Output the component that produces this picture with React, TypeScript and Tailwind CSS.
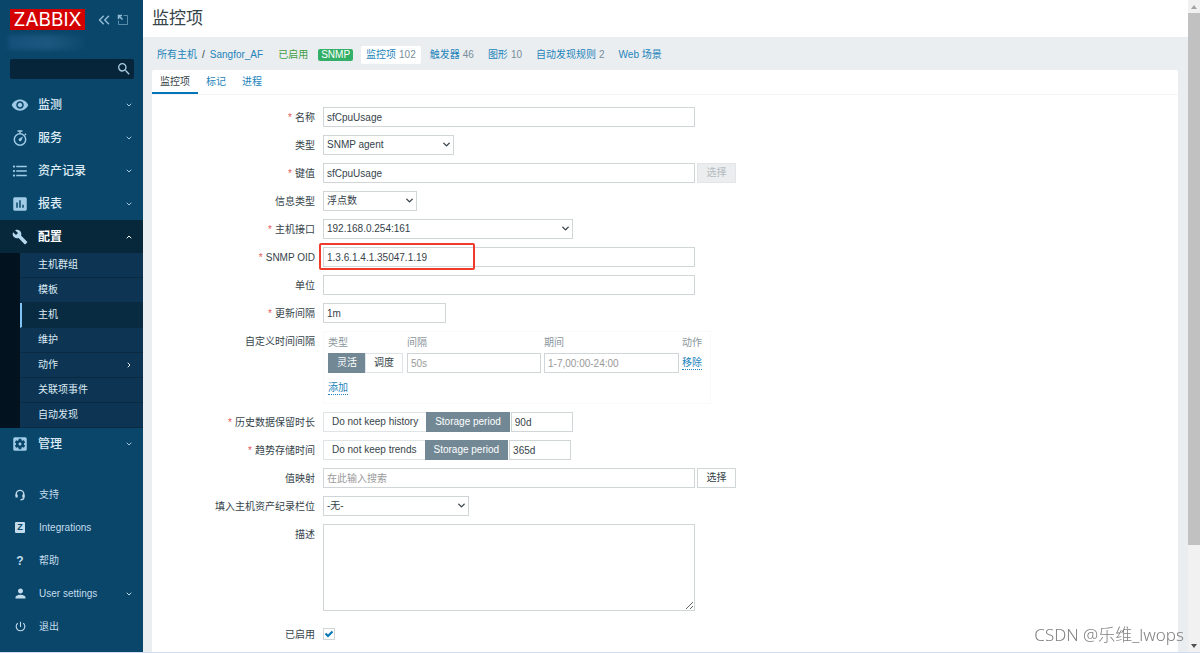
import React, { useState } from 'react';
import {
  MdVisibility,
  MdFormatListBulleted,
  MdAssessment,
  MdBuild,
  MdSettingsApplications,
  MdHeadsetMic,
  MdPerson,
  MdPowerSettingsNew,
  MdSearch
} from 'react-icons/md';
import { ChevronDown, ChevronUp, ChevronRight, ChevronsLeft } from 'lucide-react';

const inputClass =
  'h-5 border border-[#d0d5d8] bg-white px-[3px] text-[#35434a] placeholder:text-[#999999] outline-none focus:border-[#0275b8]';
const linkClass = 'text-[#2384bb] hover:underline';

const StopwatchIcon = ({ className }: { className?: string }) => (
  <svg className={className} viewBox="0 0 18 18" fill="none" stroke="currentColor" strokeWidth="1.500">
    <circle cx="9" cy="10.500" r="5.700" />
    <path d="M6.500 2h5M9 2v2.500M13.800 4.800l1.200 1.200" />
    <path d="M12 7.500l-1.600 4a1.500 1.500 0 1 1-2.200-2z" fill="currentColor" stroke="none" />
  </svg>
);

const HeadsetIcon = () => (
  <svg className="h-3 w-3" viewBox="0 0 12 12" fill="none" stroke="currentColor" strokeWidth="1.400">
    <path d="M2.200 7V5.200a3.800 3.800 0 0 1 7.600 0V8.500q0 2.300-3.300 2.300" />
    <path d="M2.600 5.500v3M9.400 5.500v3" strokeWidth="2.200" />
  </svg>
);

const ZIcon = () => (
  <span className="flex h-[11px] w-[10px] items-center justify-center rounded-[1px] bg-[#c3dcec] text-[9px] leading-none font-bold text-[#0a466a]">
    Z
  </span>
);

const HelpIcon = () => <span className="text-[12px] leading-none font-bold">?</span>;
const PersonIcon = () => <MdPerson className="h-[15px] w-[15px] shrink-0" />;
const PowerIcon = () => <MdPowerSettingsNew className="h-[13px] w-[13px] shrink-0" />;

const mainMenu = [
  { label: '监测', icon: MdVisibility },
  { label: '服务', icon: StopwatchIcon },
  { label: '资产记录', icon: MdFormatListBulleted },
  { label: '报表', icon: MdAssessment }
];

const configMenu = ['主机群组', '模板', '主机', '维护', '动作', '关联项事件', '自动发现'];

const footerMenu = [
  { label: '支持', icon: HeadsetIcon },
  { label: 'Integrations', icon: ZIcon },
  { label: '帮助', icon: HelpIcon },
  { label: 'User settings', icon: PersonIcon, expandable: true },
  { label: '退出', icon: PowerIcon }
];

const breadcrumbTabs = [
  { label: '监控项', count: '102', active: true },
  { label: '触发器', count: '46' },
  { label: '图形', count: '10' },
  { label: '自动发现规则', count: '2' },
  { label: 'Web 场景' }
];

const Sidebar: React.FC = () => (
  <aside className="flex w-[143px] shrink-0 flex-col bg-[#0a466a] text-[#c3dcec]">
    <div className="flex items-center pt-[9px] pl-[10px]">
      <a href="#" className="flex h-[21px] w-[75px] items-center justify-center bg-[#d40000] font-[Inter,sans-serif] text-[19px] leading-none text-white">
        ZABBIX
      </a>
      <button aria-label="收起" className="ml-[10px] text-[#8fbbd6]">
        <ChevronsLeft className="h-[18px] w-[18px]" strokeWidth={2} />
      </button>
      <button aria-label="隐藏" className="ml-1 text-[#8fbbd6]">
        <svg className="h-3 w-3" viewBox="0 0 12 12" fill="none" stroke="currentColor">
          <path d="M6.500 1.500h4v9h-9v-4" opacity="0.600" />
          <path d="M2 2l3.500 3.500M1.500 5V1.500H5" strokeWidth="1.500" />
        </svg>
      </button>
    </div>
    <div className="mt-[5px] ml-2 h-[15px] w-20 bg-gradient-to-r from-[#14507a] via-[#1c5780] to-[#0a466a] blur-[2px]" />
    <div className="mt-[9px] ml-[10px] flex h-5 w-[124px] items-center rounded-[2px] bg-[#06253a]">
      <input aria-label="搜索" className="h-5 min-w-0 flex-1 bg-transparent px-1 outline-none" />
      <button aria-label="搜索" className="mr-[2px] text-[#a9cbe0]">
        <MdSearch className="h-4 w-4" />
      </button>
    </div>

    <nav className="mt-[9px]">
      {mainMenu.map(({ label, icon: Icon }) => (
        <a key={label} href="#" className="flex h-[33px] items-center pr-[10px] pl-[11px] text-[12px] font-medium text-[#dcebf5]">
          <Icon className="h-[18px] w-[18px] text-[#9fcbe6]" />
          <span className="ml-[9px] flex-1">{label}</span>
          <ChevronDown className="h-2 w-2 text-[#a9cbe0]" strokeWidth={3} />
        </a>
      ))}
      <a href="#" className="flex h-[33px] items-center bg-[#07273b] pr-[10px] pl-[11px] text-[12px] font-semibold text-white">
        <MdBuild className="h-4 w-[18px] text-[#b5d8ee]" />
        <span className="ml-[9px] flex-1">配置</span>
        <ChevronUp className="h-2 w-2" strokeWidth={3} />
      </a>
      <ul className="bg-[#02131f] pl-5">
        {configMenu.map((label) => (
          <li key={label}>
            <a
              href="#"
              className={`flex h-[25px] items-center border-b border-l-2 border-b-[#0a2a42] pr-[10px] pl-4 text-[#dcebf5] ${
                label === '主机' ? 'border-l-[#7fc4f5] bg-[#082b42]' : 'border-l-[#0d3553] bg-[#0d3553]'
              }`}
            >
              <span className="flex-1">{label}</span>
              {label === '动作' && <ChevronRight className="h-2 w-2" strokeWidth={3} />}
            </a>
          </li>
        ))}
      </ul>
      <a href="#" className="flex h-8 items-center pr-[10px] pl-[11px] text-[12px] font-medium text-[#dcebf5]">
        <MdSettingsApplications className="h-[18px] w-[18px] text-[#9fcbe6]" />
        <span className="ml-[9px] flex-1">管理</span>
        <ChevronDown className="h-2 w-2 text-[#a9cbe0]" strokeWidth={3} />
      </a>
    </nav>

    <nav className="mt-[18px]">
      {footerMenu.map(({ label, icon: Icon, expandable }) => (
        <a key={label} href="#" className="flex h-[33px] items-center pr-[10px] pl-[14px] text-[#c3dcec]">
          <span className="flex w-3 items-center justify-center">
            <Icon />
          </span>
          <span className="ml-[13px] flex-1">{label}</span>
          {expandable && <ChevronDown className="h-2 w-2" strokeWidth={3} />}
        </a>
      ))}
    </nav>
  </aside>
);

interface RowProps {
  label: string;
  htmlFor?: string;
  required?: boolean;
  children: React.ReactNode;
}

const Row: React.FC<RowProps> = ({ label, htmlFor, required, children }) => (
  <div className="flex items-start">
    <label htmlFor={htmlFor} className="-mb-[2px] w-[163px] shrink-0 text-right leading-[22px]">
      {required && <span className="mr-[3px] text-[#e45959]">*</span>}
      {label}
    </label>
    <div className="ml-2 flex min-w-0 flex-1 items-center">{children}</div>
  </div>
);

const Select: React.FC<{ id: string; value: string; width: string }> = ({ id, value, width }) => (
  <div className={`relative ${width}`}>
    <select
      id={id}
      defaultValue={value}
      className="block h-5 w-full appearance-none border border-[#d0d5d8] bg-white px-[3px] text-[#35434a] outline-none"
    >
      <option>{value}</option>
    </select>
    <ChevronDown className="pointer-events-none absolute top-1 right-[2px] h-[11px] w-[11px]" strokeWidth={3} />
  </div>
);

interface SegmentedProps {
  options: string[];
  value: string;
  onChange: (value: string) => void;
}

const Segmented: React.FC<SegmentedProps> = ({ options, value, onChange }) => (
  <div className="flex">
    {options.map((option) => (
      <button
        key={option}
        type="button"
        onClick={() => onChange(option)}
        className={`h-5 border px-2 whitespace-nowrap not-first:-ml-px ${
          option === value ? 'border-[#728995] bg-[#728995] text-white' : 'border-[#dfe4e7] bg-white text-[#35434a]'
        }`}
      >
        {option}
      </button>
    ))}
  </div>
);

const ItemForm: React.FC = () => {
  const [intervalType, setIntervalType] = useState('灵活');
  const [history, setHistory] = useState('Storage period');
  const [trends, setTrends] = useState('Storage period');

  return (
    <form className="flex flex-col gap-2 pt-3">
      <Row label="名称" htmlFor="name" required>
        <input id="name" defaultValue="sfCpuUsage" className={`w-[372px] ${inputClass}`} />
      </Row>
      <Row label="类型" htmlFor="type">
        <Select id="type" value="SNMP agent" width="w-[131px]" />
      </Row>
      <Row label="键值" htmlFor="key" required>
        <input id="key" defaultValue="sfCpuUsage" className={`w-[372px] ${inputClass}`} />
        <button type="button" disabled className="ml-[2px] h-5 w-[39px] border border-[#e3e6e8] bg-[#ebedee] text-[#b4bbbf]">
          选择
        </button>
      </Row>
      <Row label="信息类型" htmlFor="value-type">
        <Select id="value-type" value="浮点数" width="w-[94px]" />
      </Row>
      <Row label="主机接口" htmlFor="interface" required>
        <Select id="interface" value="192.168.0.254:161" width="w-[250px]" />
      </Row>
      <Row label="SNMP OID" htmlFor="oid" required>
        <div className="relative">
          <input id="oid" defaultValue="1.3.6.1.4.1.35047.1.19" className={`block w-[372px] ${inputClass}`} />
          <div className="pointer-events-none absolute -top-1 -left-1 h-[27px] w-[156px] rounded-[2px] border-2 border-[#ee3b2b]" />
        </div>
      </Row>
      <Row label="单位" htmlFor="units">
        <input id="units" className={`w-[372px] ${inputClass}`} />
      </Row>
      <Row label="更新间隔" htmlFor="delay" required>
        <input id="delay" defaultValue="1m" className={`w-[123px] ${inputClass}`} />
      </Row>
      <Row label="自定义时间间隔">
        <div className="border border-[#f8fafb]">
          <table className="border-collapse text-left">
            <thead className="text-[#8a969c]">
              <tr className="h-[21px]">
                <th className="pl-1 font-normal">类型</th>
                <th className="font-normal">间隔</th>
                <th className="font-normal">期间</th>
                <th className="font-normal">动作</th>
              </tr>
            </thead>
            <tbody>
              <tr className="h-5">
                <td className="pr-1 pl-1">
                  <Segmented options={['灵活', '调度']} value={intervalType} onChange={setIntervalType} />
                </td>
                <td className="pr-[3px]">
                  <input aria-label="间隔" placeholder="50s" className={`block w-[134px] ${inputClass}`} />
                </td>
                <td className="pr-[3px]">
                  <input aria-label="期间" placeholder="1-7,00:00-24:00" className={`block w-[135px] ${inputClass}`} />
                </td>
                <td className="pr-2">
                  <button type="button" className="border-b border-dotted border-[#2384bb] leading-3 text-[#2384bb]">移除</button>
                </td>
              </tr>
              <tr className="h-[30px]">
                <td colSpan={4} className="pl-1">
                  <button type="button" className="border-b border-dotted border-[#2384bb] leading-3 text-[#2384bb]">添加</button>
                </td>
              </tr>
            </tbody>
          </table>
        </div>
      </Row>
      <Row label="历史数据保留时长" htmlFor="history" required>
        <Segmented options={['Do not keep history', 'Storage period']} value={history} onChange={setHistory} />
        <input id="history" defaultValue="90d" className={`ml-[1px] w-[62px] ${inputClass}`} />
      </Row>
      <Row label="趋势存储时间" htmlFor="trends" required>
        <Segmented options={['Do not keep trends', 'Storage period']} value={trends} onChange={setTrends} />
        <input id="trends" defaultValue="365d" className={`ml-[1px] w-[62px] ${inputClass}`} />
      </Row>
      <Row label="值映射" htmlFor="valuemap">
        <input id="valuemap" placeholder="在此输入搜索" className={`w-[372px] ${inputClass}`} />
        <button type="button" className="ml-[2px] h-5 w-[39px] border border-[#d0d5d8] bg-white">
          选择
        </button>
      </Row>
      <Row label="填入主机资产纪录栏位" htmlFor="inventory">
        <Select id="inventory" value="-无-" width="w-[146px]" />
      </Row>
      <Row label="描述" htmlFor="description">
        <textarea id="description" className="mb-[5px] block h-[87px] w-[372px] border border-[#d0d5d8] bg-white p-1 outline-none" />
      </Row>
      <Row label="已启用" htmlFor="enabled">
        <div className="relative mt-1 h-3 w-3">
          <input
            id="enabled"
            type="checkbox"
            defaultChecked
            className="peer block h-3 w-3 appearance-none border border-[#d0d5d8] bg-white"
          />
          <svg className="pointer-events-none absolute inset-0 hidden h-3 w-3 peer-checked:block" viewBox="0 0 12 12" fill="none">
            <path d="M2.500 5.500L5 8l4.500-4.500" stroke="#0275b8" strokeWidth="2" />
          </svg>
        </div>
      </Row>
    </form>
  );
};

const App: React.FC = () => {
  return (
    <div className="flex min-h-screen border-b border-[#d0dcf0] bg-[#ebeef0] font-['Liberation_Sans','Noto_Sans_CJK_SC',sans-serif] text-[10px] leading-[14px] text-[#35434a]">
      <Sidebar />

      <main className="flex min-w-0 flex-1 flex-col">
        <header className="flex h-[37px] items-center bg-white pl-[9px]">
          <h1 className="text-[17px] leading-6">监控项</h1>
        </header>

        <nav className="flex h-[33px] items-center pt-[2px] pl-[14px] whitespace-nowrap">
          <a href="#" className={linkClass}>所有主机</a>
          <span className="mx-[5px]">/</span>
          <a href="#" className={linkClass}>Sangfor_AF</a>
          <span className="ml-[15px] text-[#429e47]">已启用</span>
          <span className="ml-[10px] rounded-[2px] bg-[#34af67] px-[3px] leading-3 text-white">SNMP</span>
          <div className="ml-2 flex items-center gap-1">
            {breadcrumbTabs.map((tab) => (
              <a
                key={tab.label}
                href="#"
                className={`rounded-[2px] px-[5px] leading-[18px] text-[#2384bb] ${tab.active ? 'bg-white' : ''}`}
              >
                {tab.label}
                {tab.count && <span className="ml-[3px] text-[#768d99]">{tab.count}</span>}
              </a>
            ))}
          </div>
        </nav>

        <section className="mr-[10px] ml-[9px] flex-1 rounded-t-[2px] bg-white">
          <div className="flex h-[25px] border-b border-[#f3f5f6]">
            <button className="border-b-2 border-[#0275b8] px-2 pt-[2px]">监控项</button>
            <button className="px-2 text-[#2384bb]">标记</button>
            <button className="px-2 text-[#2384bb]">进程</button>
          </div>
          <ItemForm />
        </section>
      </main>

      {/* Scrollbar */}
      <div aria-hidden="true" className="flex w-3 flex-col items-center bg-[#f1f1f1]">
        <div className="flex h-[13px] items-center">
          <div className="border-x-[3px] border-b-[4px] border-x-transparent border-b-[#a3a3a3]" />
        </div>
        <div className="w-full flex-[532] bg-[#c1c1c1]" />
        <div className="flex-[94]" />
        <div className="flex h-[13px] items-center">
          <div className="border-x-[3px] border-t-[4px] border-x-transparent border-t-[#505050]" />
        </div>
      </div>

      <div className="pointer-events-none fixed right-4 bottom-[6px] font-['Noto_Sans','Noto_Sans_CJK_SC',sans-serif] text-[17px] leading-6 font-light text-[#808080]">
        CSDN @乐维_lwops
      </div>
    </div>
  );
};

export default App;
